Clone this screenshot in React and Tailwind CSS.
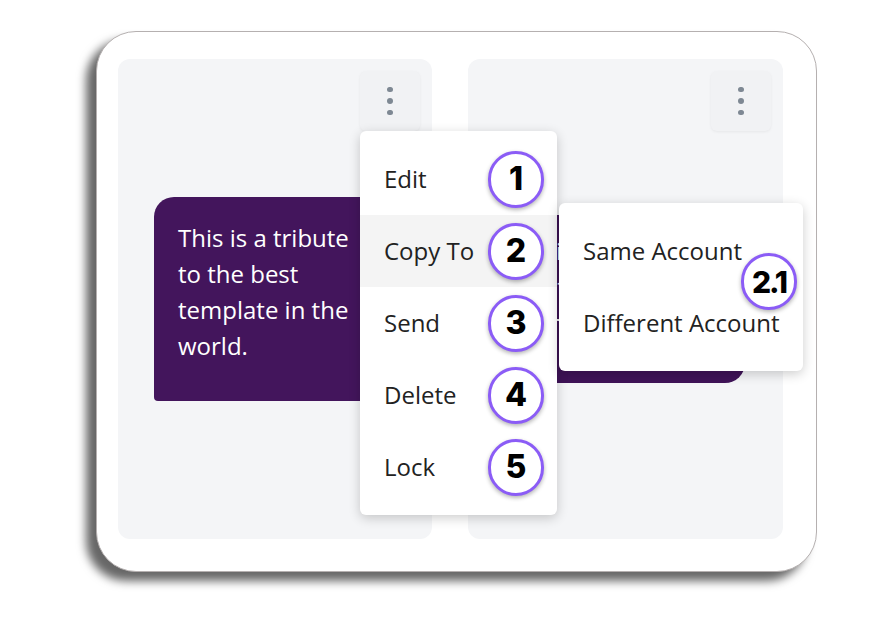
import React from "react";

const sans = { fontFamily: '"Open Sans", "Noto Sans", sans-serif' };
const num = { fontFamily: 'Inter, "Liberation Sans", sans-serif' };

function Kebab() {
  return (
    <div className="flex h-[60px] w-[60px] flex-col items-center justify-center gap-[6px] rounded-[6px] bg-[#f1f2f4] shadow-[0_1px_3px_rgba(0,0,0,0.06)]">
      <span className="h-[5.5px] w-[5.5px] rounded-full bg-[#7e8893]" />
      <span className="h-[5.5px] w-[5.5px] rounded-full bg-[#7e8893]" />
      <span className="h-[5.5px] w-[5.5px] rounded-full bg-[#7e8893]" />
    </div>
  );
}

function Badge({ children, className = "" }) {
  return (
    <div
      className={`flex h-[57px] w-[56px] items-center justify-center rounded-full border-[3px] border-[#8b5cf6] bg-white font-extrabold leading-none text-black shadow-[0_2px_4px_rgba(0,0,0,0.3)] ${className}`}
      style={num}
    >
      {children}
    </div>
  );
}

function MenuRow({ label, n, active }) {
  return (
    <div className={`flex h-[72px] items-center justify-between pl-[24px] pr-[13px] ${active ? "bg-[#f4f4f4]" : ""}`}>
      <span className="text-[24px] text-[#222]">{label}</span>
      <Badge className="text-[32px]">{n}</Badge>
    </div>
  );
}

export default function App() {
  return (
    <div className="relative h-[621px] w-[870px] overflow-hidden bg-white" style={sans}>
      <div className="pl-[96px] pt-[31px]">
        <div className="flex h-[541px] w-[721px] gap-[36px] rounded-[40px] border border-[#b5b0b0] bg-white pl-[21px] pt-[27px] shadow-[-10px_9px_10px_rgba(0,0,0,0.6)]">
          <div className="flex h-[480px] w-[314px] flex-col rounded-[12px] bg-[#f4f5f7]">
            <div className="flex justify-end p-[12px]">
              <Kebab />
            </div>
            <div className="ml-[36px] mt-[54px] h-[204px] w-[242px] rounded-bl-[4px] rounded-br-[4px] rounded-tl-[20px] rounded-tr-[4px] bg-[#43155c] px-[24px] pt-[23px] text-[24px] leading-[36px] text-white">
              This is a tribute to the best template in the world.
            </div>
          </div>
          <div className="flex h-[480px] w-[315px] flex-col rounded-[12px] bg-[#f4f5f7]">
            <div className="flex justify-end p-[12px]">
              <Kebab />
            </div>
            <div className="ml-[36px] mt-[72px] h-[168px] w-[241px] rounded-bl-[4px] rounded-br-[20px] rounded-tl-[4px] rounded-tr-[4px] bg-[#3f1358] px-[24px] pt-[18px] text-[24px] leading-[36px] text-white">
              This is a tribute to the best template
            </div>
          </div>
        </div>
      </div>

      <div className="absolute left-[360px] top-[131px] w-[197px] rounded-[6px] bg-white py-[12px] shadow-[0_3px_12px_rgba(0,0,0,0.2)]">
        <MenuRow label="Edit" n="1" />
        <MenuRow label="Copy To" n="2" active />
        <MenuRow label="Send" n="3" />
        <MenuRow label="Delete" n="4" />
        <MenuRow label="Lock" n="5" />
      </div>

      <div className="absolute left-[559px] top-[203px] w-[244px] rounded-[6px] bg-white py-[12px] shadow-[0_3px_12px_rgba(0,0,0,0.2)]">
        <div className="flex h-[72px] items-center pl-[24px] text-[24px] text-[#222]">Same Account</div>
        <div className="flex h-[72px] items-center pl-[24px] text-[24px] text-[#222]">Different Account</div>
      </div>

      <div className="absolute left-[741px] top-[253px]">
        <Badge className="text-[30px] tracking-[-2px]">2.1</Badge>
      </div>
    </div>
  );
}
